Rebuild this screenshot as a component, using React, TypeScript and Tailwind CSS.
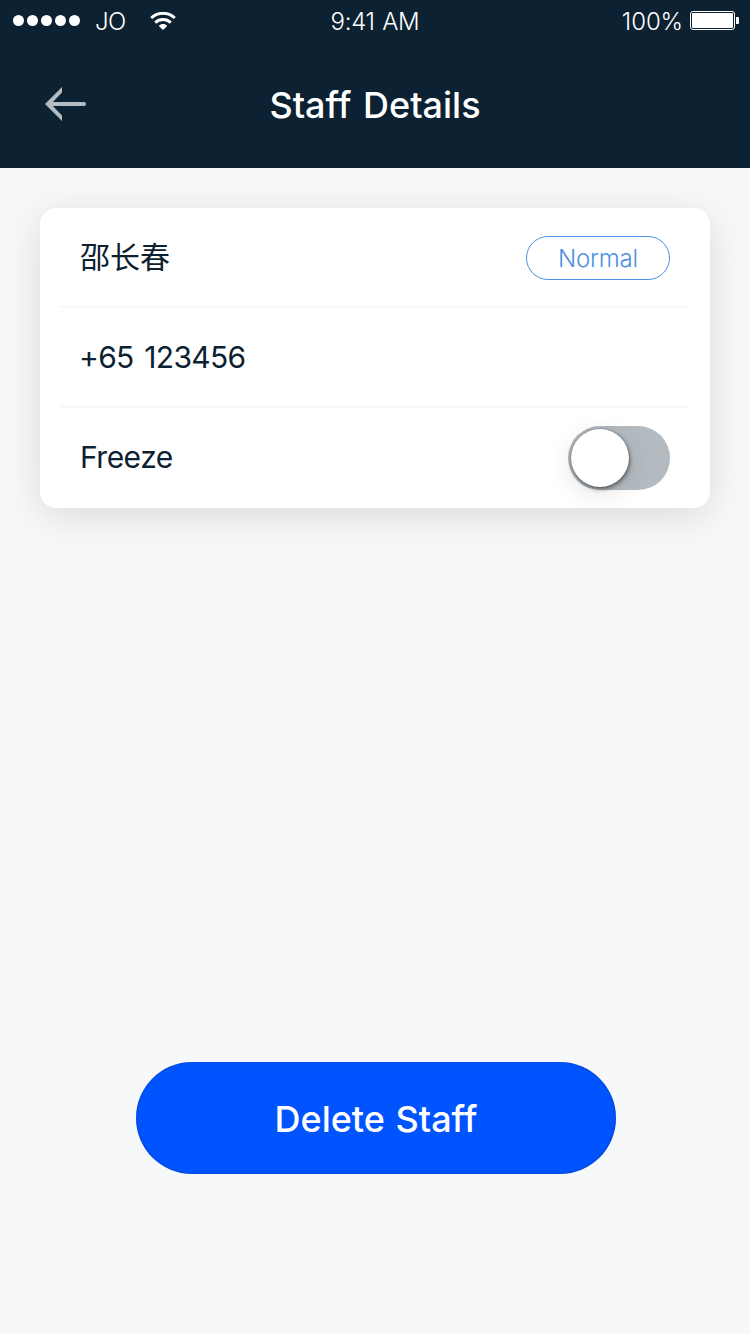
import React from "react";

function StatusBar() {
  return (
    <div className="grid h-10 grid-cols-3 items-center text-2xl font-light leading-8">
      <div className="flex h-10 items-center pl-[13px]">
        <div className="mt-px flex gap-[3px]">
          {[0, 1, 2, 3, 4].map((dot) => (
            <span key={dot} className="size-[11px] rounded-full bg-white" />
          ))}
        </div>
        <span className="ml-[15px] mt-1 w-[31px] tracking-[-0.5px]">JO</span>
        <svg className="ml-6 mt-0.5" width="26" height="18" viewBox="0 0 26 18" fill="none">
          <path d="M1.2 6C8 -0.2 18 -0.2 24.8 6" stroke="white" strokeWidth="3" />
          <path d="M5.2 10.6C9.7 6.5 16.3 6.5 20.8 10.6" stroke="white" strokeWidth="3" />
          <path d="M8.8 14C11 11.4 15 11.4 17.2 14L13 18Z" fill="white" />
        </svg>
      </div>
      <span className="mt-1 text-center tracking-[-0.3px] [word-spacing:1px]">9:41 AM</span>
      <div className="flex h-10 items-center justify-end pr-[11px]">
        <span className="mt-1 tracking-[-0.1px]">100%</span>
        <svg className="ml-[7px] mt-px" width="49" height="19" viewBox="0 0 49 19" fill="none">
          <rect x="0.5" y="0.5" width="44" height="18" rx="2.5" stroke="white" />
          <rect x="2" y="2" width="41" height="15" rx="1" fill="white" />
          <path d="M46 6h2q1 0 1 1v5q0 1-1 1h-2Z" fill="white" />
        </svg>
      </div>
    </div>
  );
}

export default function App() {
  return (
    <main className="flex h-[1334px] w-[750px] flex-col bg-[#f7f8fa] font-['Inter','Noto_Sans_CJK_SC',sans-serif] text-[#0c2131]">
      <header className="h-[168px] bg-[#0c2131] text-white">
        <StatusBar />
        <div className="grid h-32 grid-cols-[200px_1fr_200px] items-center">
          <button aria-label="Back" className="pl-[45px]">
            <svg width="42" height="34" viewBox="0 0 42 34" fill="none">
              <path d="M17 0V5.5L7.8 15H39a2 2 0 0 1 0 4H7.8L17 28.5V34L0 17Z" fill="#b4bcc3" />
            </svg>
          </button>
          <h1 className="pt-0.5 text-center text-4xl font-medium leading-10 [word-spacing:2px]">Staff Details</h1>
        </div>
      </header>

      <section className="mx-10 mt-10 h-[300px] rounded-2xl bg-white px-5 text-[30px] shadow-[0_8px_40px_rgba(0,0,0,0.12)]">
        <div className="flex h-[100px] items-center justify-between border-b-2 border-[#f7f8f9] px-5">
          <span className="mb-[3px] font-['Noto_Sans_CJK_SC',sans-serif]">邵长春</span>
          <span className="mt-0.5 flex h-11 w-36 items-center justify-center rounded-full border border-[#4a90e2] pt-px text-2xl font-light tracking-[-0.2px] text-[#4a90e2]">Normal</span>
        </div>
        <div className="flex h-[100px] items-center border-b-2 border-[#f7f8f9] px-5 tracking-[-0.7px] [word-spacing:3px]">
          <span className="-ml-px">+65 123456</span>
        </div>
        <div className="flex h-[100px] items-center justify-between px-5">
          <span className="mb-px tracking-[-0.5px]">Freeze</span>
          <button role="switch" aria-checked="false" aria-label="Freeze" className="h-16 w-[102px] rounded-full bg-[#b3bbc1] p-[3px]">
            <span className="block size-[58px] rounded-full bg-white shadow-[0_0_2px_rgba(0,0,0,0.3),1px_2px_4px_rgba(0,0,0,0.45),0_6px_24px_rgba(0,0,0,0.12)]" />
          </button>
        </div>
      </section>

      <button className="ml-[136px] mt-[554px] h-28 w-[480px] rounded-full bg-[#0054ff] pt-0.5 text-4xl font-medium text-white shadow-[inset_0_0_3px_rgba(0,0,0,0.3)] [word-spacing:1px]">
        Delete Staff
      </button>
    </main>
  );
}
